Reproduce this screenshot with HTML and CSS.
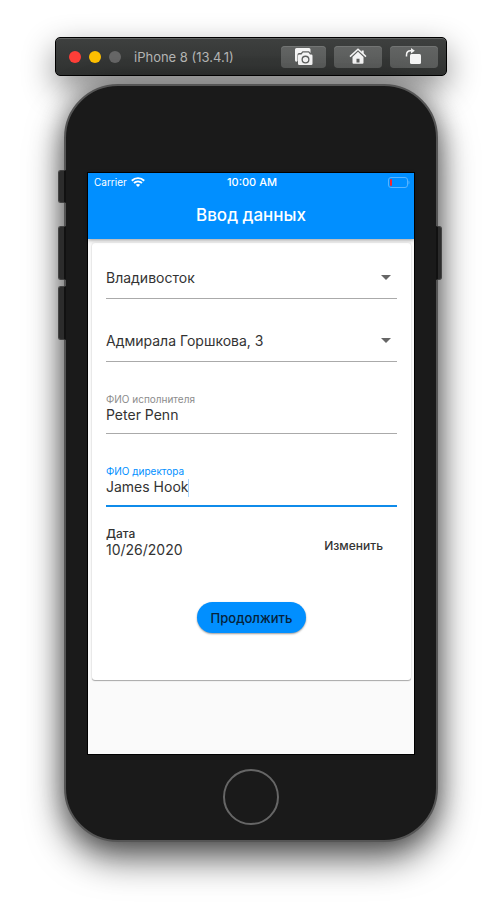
FILE: index.html
```html
<!DOCTYPE html>
<html lang="ru">
<head>
<meta charset="utf-8">
<meta name="viewport" content="width=device-width, initial-scale=1">
<title>Ввод данных</title>
<link rel="stylesheet" href="styles.css">
</head>
<body>
<header class="toolbar">
  <div class="lights">
    <span class="light light-close"></span>
    <span class="light light-min"></span>
    <span class="light"></span>
  </div>
  <span class="toolbar-title">iPhone 8 (13.4.1)</span>
  <div class="tools">
    <button class="tool tool-small" type="button" aria-label="Screenshot">
      <svg width="18" height="18" viewBox="0 0 18 18" fill="#f4f4f4">
        <path d="M1.500 0H14a1.500 1.500 0 0 1 1.500 1.500V5L14 3.300H7.500L6 5H4a1.500 1.500 0 0 0-1.500 1.500V13L1 14 0 12.500v-11A1.500 1.500 0 0 1 1.500 0z"/>
        <path fill-rule="evenodd" d="M4.300 6.500h2.200L8 4.500h5.500L15 6.500h1.200A1.300 1.300 0 0 1 17.500 7.800v7.900a1.300 1.300 0 0 1-1.300 1.300H4.300A1.300 1.300 0 0 1 3 15.700V7.800a1.300 1.300 0 0 1 1.300-1.300zM10.500 7.600a4 4 0 1 0 0 8 4 4 0 0 0 0-8zM10.500 8.900a2.700 2.700 0 1 1 0 5.400 2.700 2.700 0 0 1 0-5.400z"/>
      </svg>
    </button>
    <button class="tool" type="button" aria-label="Home">
      <svg width="18" height="18" viewBox="0 0 18 18" fill="#f4f4f4">
        <path d="M1 8.600 9 1.200l8 7.400" fill="none" stroke="#f4f4f4" stroke-width="1.500"/>
        <path d="M12.700 2.500h2v4l-2-2z"/>
        <path fill-rule="evenodd" d="M9 3.800 14.500 9v5.700a1 1 0 0 1-1 1h-9a1 1 0 0 1-1-1V9zM7.500 10.700v3.800h3v-3.800z"/>
      </svg>
    </button>
    <button class="tool" type="button" aria-label="Rotate">
      <svg width="18" height="18" viewBox="0 0 18 18" fill="#f4f4f4">
        <rect x="5" y="6" width="11" height="10" rx="1.500"/>
        <path d="M1.500 8.500V7C1.500 4.200 3 2.700 5.500 2.700H7" fill="none" stroke="#f4f4f4" stroke-width="1.500"/>
        <path d="M6 0 9.800 2.700 6 5.500z"/>
      </svg>
    </button>
  </div>
</header>

<div class="phone">
  <span class="side side-mute"></span>
  <span class="side side-up"></span>
  <span class="side side-down"></span>
  <span class="side side-power"></span>
  <main class="screen">
    <div class="appbar">
      <div class="status">
        <span class="carrier">Carrier
          <svg width="14" height="10" viewBox="0 0 14 10" fill="none" stroke="#fff" stroke-width="1.900">
            <path d="M.8 3.700C4.300.300 9.700.300 13.200 3.700M3 6C5.300 3.900 8.700 3.900 11 6"/>
            <path d="M7 10 4.800 7.800C6 6.700 8 6.700 9.200 7.800z" fill="#fff" stroke="none"/>
          </svg>
        </span>
        <span class="clock">10:00 AM</span>
        <span class="battery">
          <svg width="22" height="11" viewBox="0 0 22 11">
            <rect x=".5" y=".5" width="19" height="10" rx="2.500" fill="none" stroke="#59b4ff"/>
            <rect x="2" y="2" width="2" height="7" rx="1" fill="#f5262f"/>
            <path d="M20.500 3.500c1.300.5 1.300 3.500 0 4z" fill="#59b4ff"/>
          </svg>
        </span>
      </div>
      <h1 class="title">Ввод данных</h1>
    </div>

    <form class="card">
      <div class="picker">
        <select class="select" aria-label="Город"><option>Владивосток</option></select>
        <svg class="arrow" width="10" height="5" viewBox="0 0 10 5"><path d="M0 0h10L5 5z" fill="#666"/></svg>
      </div>
      <div class="picker">
        <select class="select" aria-label="Адрес"><option>Адмирала Горшкова, 3</option></select>
        <svg class="arrow" width="10" height="5" viewBox="0 0 10 5"><path d="M0 0h10L5 5z" fill="#666"/></svg>
      </div>
      <div class="field">
        <label class="label" for="worker">ФИО исполнителя</label>
        <input class="input" id="worker" type="text" value="Peter Penn">
      </div>
      <div class="field field-active">
        <label class="label" for="director">ФИО директора</label>
        <div class="entry">
          <input class="input input-fit" id="director" type="text" value="James Hook">
          <span class="caret"></span>
        </div>
      </div>
      <div class="date">
        <div>
          <div class="date-label">Дата</div>
          <div class="date-value">10/26/2020</div>
        </div>
        <button class="change" type="button">Изменить</button>
      </div>
      <button class="submit" type="button">Продолжить</button>
    </form>
  </main>
  <button class="home" type="button" aria-label="Home button"></button>
</div>
</body>
</html>
```
FILE: styles.css
```css
* { box-sizing: border-box; }

body {
  margin: 0;
  padding: 37px 55px 72px;
  background: #fff;
  font-family: Inter, "Liberation Sans", sans-serif;
  color: #333;
}

button, input, select {
  margin: 0;
  padding: 0;
  border: 0;
  background: none;
  font: inherit;
  color: inherit;
  outline: 0;
}

.toolbar {
  display: flex;
  align-items: center;
  height: 39px;
  padding: 0 8px 0 13px;
  border: 1px solid #000;
  border-radius: 5px;
  background: linear-gradient(#3e403f, #2f3130);
  box-shadow: inset 0 1px #626463, 0 12px 32px rgba(0, 0, 0, .45);
}

.lights { display: flex; gap: 8px; }

.light {
  width: 12px;
  height: 12px;
  border-radius: 50%;
  background: #666;
}

.light-close { background: #ff3e38; }
.light-min { background: #ffc000; }

.toolbar-title {
  margin-left: 13px;
  font-size: 13px;
  white-space: nowrap;
  color: #b4b5b4;
}

.tools {
  display: flex;
  gap: 8px;
  margin-left: auto;
}

.tool {
  display: flex;
  align-items: center;
  justify-content: center;
  width: 48px;
  height: 22px;
  border-radius: 4px;
  background: linear-gradient(#626463, #595b5a);
  box-shadow: inset 0 1px #737574;
}

.tool-small { width: 45px; }

.phone {
  position: relative;
  display: flex;
  flex-direction: column;
  align-items: center;
  margin: 8px 9px 0;
  padding: 86px 21px 15px;
  border: 2px solid #555;
  border-radius: 54px;
  background: #1a1a1a;
  box-shadow: 0 16px 36px rgba(0, 0, 0, .65), 0 0 24px rgba(0, 0, 0, .3);
}

.side {
  position: absolute;
  left: -8px;
  width: 8px;
  height: 54px;
  border: 1px solid #444;
  border-right: 2px solid #111;
  border-radius: 3px 0 0 3px;
  background: #2c2c2c;
}

.side-mute { top: 84px; height: 33px; }
.side-up { top: 140px; }
.side-down { top: 200px; }

.side-power {
  top: 140px;
  left: auto;
  right: -6px;
  width: 6px;
  border-right: 1px solid #444;
  border-left: 2px solid #111;
  border-radius: 0 3px 3px 0;
}

.screen {
  align-self: stretch;
  padding-bottom: 74px;
  border: 1px solid #000;
  background: #fafafa;
}

.appbar {
  position: relative;
  height: 66px;
  background: #018fff;
  color: #fff;
  box-shadow: 0 1px 4px rgba(0, 0, 0, .4);
}

.status {
  display: grid;
  grid-template-columns: 1fr auto 1fr;
  align-items: center;
  height: 18px;
  padding: 0 4px 0 6px;
}

.carrier {
  display: flex;
  align-items: center;
  gap: 4px;
  font-size: 10px;
}

.clock {
  font-size: 11px;
  font-weight: 500;
}

.battery { display: flex; justify-content: flex-end; }

.title {
  margin: 0;
  font-size: 17px;
  font-weight: 500;
  line-height: 48px;
  text-align: center;
}

.card {
  display: flex;
  flex-direction: column;
  margin: 4px 3px 0 4px;
  padding: 14px 14px 47px;
  border-radius: 3px;
  background: #fff;
  box-shadow: 0 1px 1px rgba(0, 0, 0, .3), 0 0 2px rgba(0, 0, 0, .15);
  font-size: 14px;
}

.picker {
  display: flex;
  align-items: center;
  height: 42px;
  margin-bottom: 21px;
  padding-right: 6px;
  border-bottom: 1px solid #aaa;
}

.select {
  flex: 1;
  height: 24px;
  appearance: none;
}

.arrow { flex: none; }

.field {
  margin: 9px 0 21px;
  padding-bottom: 10px;
  border-bottom: 1px solid #aaa;
}

.field-active {
  margin-bottom: 19px;
  border-bottom: 2px solid #0f8bea;
}

.label {
  display: block;
  font-size: 10px;
  line-height: 15px;
  color: #8c8c8c;
}

.field-active .label { color: #018fff; }

.input {
  display: block;
  width: 100%;
  height: 16px;
  line-height: 16px;
}

.entry { display: flex; height: 16px; }
.input-fit { width: auto; field-sizing: content; }

.caret {
  width: 1px;
  height: 18px;
  background: #a8d8ff;
}

.date {
  display: flex;
  align-items: flex-end;
  justify-content: space-between;
  padding-right: 14px;
  line-height: 16px;
}

.date-label {
  font-size: 12px;
  font-weight: 500;
}

.change {
  padding-bottom: 4px;
  font-size: 12px;
  font-weight: 500;
}

.submit {
  align-self: center;
  height: 31px;
  margin-top: 44px;
  padding: 0 14px;
  border-radius: 16px;
  background: #018fff;
  box-shadow: 0 1px 2px rgba(0, 0, 0, .4);
  font-size: 13px;
  font-weight: 500;
  color: #06223a;
}

.home {
  width: 56px;
  height: 56px;
  margin-top: 14px;
  border: 2px solid #666;
  border-radius: 50%;
}
```
